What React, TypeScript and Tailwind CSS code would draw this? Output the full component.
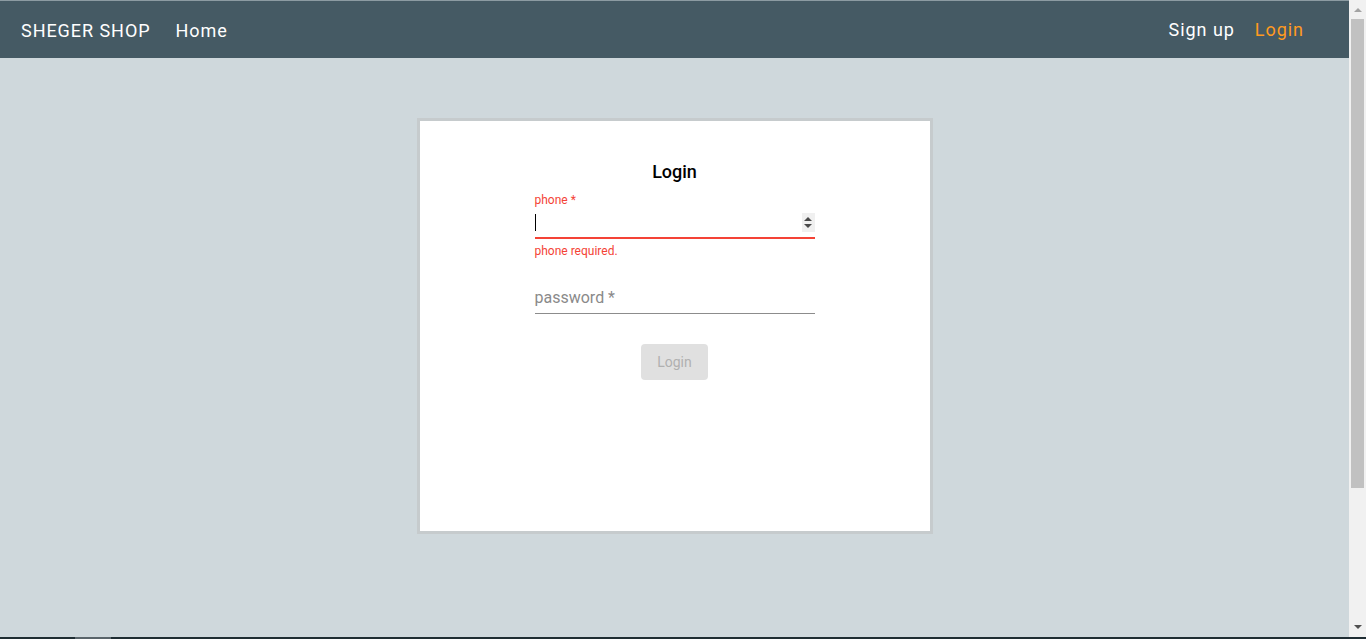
import React from "react";

function Scrollbar() {
  return (
    <div className="w-[17px] h-full bg-[#f1f1f1] flex flex-col items-center shrink-0">
      <div className="h-[19px] w-full flex items-center justify-center">
        <div className="w-0 h-0 border-l-[4px] border-r-[4px] border-b-[4px] border-l-transparent border-r-transparent border-b-[#a3a3a3]" />
      </div>
      <div className="w-[13px] h-[469px] bg-[#c1c1c1]" />
      <div className="flex-1" />
      <div className="h-[20px] w-full flex items-center justify-center">
        <div className="w-0 h-0 border-l-[4px] border-r-[4px] border-t-[4px] border-l-transparent border-r-transparent border-t-[#505050]" />
      </div>
    </div>
  );
}

export default function App() {
  return (
    <div className="h-[639px] overflow-hidden flex flex-col" style={{ fontFamily: "Roboto, 'Liberation Sans', sans-serif" }}>
      <div className="h-[637px] flex">
        <div className="flex-1 h-full bg-[#cfd8dc] flex flex-col">
          <nav className="h-[58px] shrink-0 bg-[#455a64] border-t border-[#8c9ba2] flex items-center pl-[21px] pr-[45px] text-white text-[18px] tracking-[0.95px]">
            <div className="flex items-center gap-[25px] pt-[2px]">
              <span>SHEGER SHOP</span>
              <span>Home</span>
            </div>
            <div className="ml-auto flex items-center gap-[20px]">
              <span>Sign up</span>
              <span className="text-[#ff9a1f]">Login</span>
            </div>
          </nav>
          <main className="flex-1 pt-[60px]">
            <div className="mx-auto w-[516px] h-[416px] border-[3px] border-[#c6cbcd] bg-white pt-[40px]">
              <h1 className="text-center text-[18px] leading-[22px] font-medium text-black">Login</h1>
              <div className="mx-auto w-[280px] flex flex-col">
                <div className="mt-[10px] h-[14px] text-[12px] leading-[14px] text-[#f44336]">phone *</div>
                <div className="h-[30px] flex items-center justify-between">
                  <div className="w-px h-[17px] bg-black" />
                  <div className="w-[13px] h-[19px] bg-[#f0f0f0] flex flex-col items-center justify-center gap-[3px]">
                    <div className="w-0 h-0 border-l-[4px] border-r-[4px] border-b-[4px] border-l-transparent border-r-transparent border-b-[#4a4a4a]" />
                    <div className="w-0 h-0 border-l-[4px] border-r-[4px] border-t-[4px] border-l-transparent border-r-transparent border-t-[#4a4a4a]" />
                  </div>
                </div>
                <div className="h-[2px] bg-[#f44336]" />
                <div className="mt-[5px] h-[14px] text-[12px] leading-[14px] text-[#f44336]">phone required.</div>
                <div className="mt-[25px] h-[30px] flex items-center text-[16px] text-[#8a8a8a]">password *</div>
                <div className="h-px bg-[#8c8c8c]" />
                <button className="mt-[30px] self-center w-[67px] h-[36px] rounded-[4px] bg-[#e0e0e0] text-[14px] text-[#b0b0b0]">Login</button>
              </div>
            </div>
          </main>
        </div>
        <Scrollbar />
      </div>
      <div className="h-[2px] bg-[#1f2d33] flex pl-[75px]">
        <div className="w-[36px] h-full bg-[#5a656b]" />
      </div>
    </div>
  );
}
